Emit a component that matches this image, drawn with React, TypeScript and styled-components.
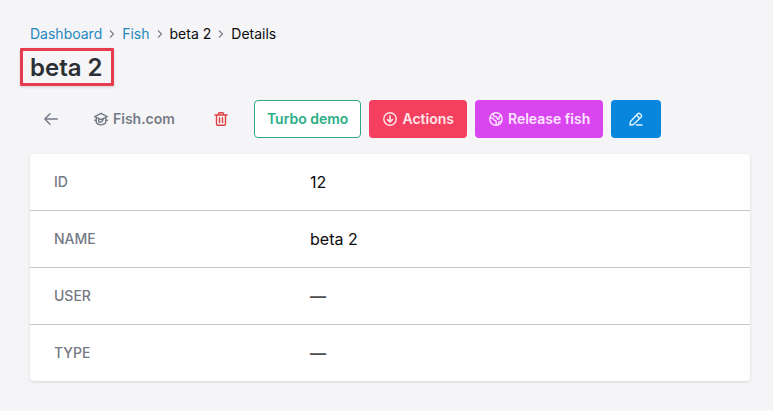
import React from "react";
import styled, { createGlobalStyle, css } from "styled-components";

const GlobalStyle = createGlobalStyle`
  * { box-sizing: border-box; }
  body {
    margin: 0;
    background: #f5f5f8;
    color: #0b0b0c;
    font-family: Inter, "Liberation Sans", sans-serif;
    font-size: 16px;
    line-height: 24px;
  }
`;

const Page = styled.main`
  padding: 24px 23px 30px 30px;
`;

const Breadcrumbs = styled.ol`
  display: flex;
  align-items: center;
  gap: 6px;
  margin: 0;
  padding: 0;
  list-style: none;
  font-size: 14px;
  line-height: 20px;
`;

const Crumb = styled.li`
  display: flex;
  align-items: center;
  gap: 6px;
`;

const CrumbLink = styled.a`
  color: #1f87bd;
  text-decoration: none;
`;

const Title = styled.h1`
  width: fit-content;
  margin: 4px 0 14px -10px;
  padding: 1px 8px 0 7px;
  border: 3px solid #e63c4d;
  border-radius: 1px;
  box-shadow: 0 1px 3px rgba(0, 0, 0, 0.15);
  color: #2c2f33;
  font-size: 24px;
  font-weight: 600;
  line-height: 31px;
`;

const Toolbar = styled.div`
  display: flex;
  gap: 8px;
  margin-bottom: 16px;
`;

type Tone = "plain" | "danger" | "outline" | "red" | "pink" | "blue";

const tones = {
  plain: css`color: #747b87;`,
  danger: css`color: #df3f40;`,
  outline: css`color: #2aae85; background: #fff; border-color: #2fa884;`,
  red: css`color: #ffe6ea; background: #f43f5e;`,
  pink: css`color: #fbe4ff; background: #d946ef;`,
  blue: css`color: #e3f4ff; background: #0886de;`,
};

const controlStyle = css<{ $tone: Tone; $icon?: boolean }>`
  display: inline-flex;
  align-items: center;
  justify-content: center;
  gap: 4px;
  height: 38px;
  padding: 0 ${(p) => (p.$icon ? 16 : 12)}px;
  border: 1px solid transparent;
  border-radius: 4px;
  background: transparent;
  font: 600 14px/20px Inter, "Liberation Sans", sans-serif;
  text-decoration: none;
  white-space: nowrap;
  cursor: pointer;
  ${(p) => tones[p.$tone]}
`;

const Button = styled.button`${controlStyle}`;
const ButtonLink = styled.a`${controlStyle}`;
const BackLink = styled(ButtonLink)`
  padding: 0 12px;
`;

const Glyph = styled.svg`
  flex: none;
  width: 16px;
  height: 16px;
  fill: none;
  stroke: currentColor;
  stroke-width: 1.4;
  stroke-linecap: round;
  stroke-linejoin: round;
`;

const Separator = styled.svg`
  width: 8px;
  height: 12px;
  fill: none;
  stroke: #7b7f86;
  stroke-width: 1.2;
`;

const Details = styled.table`
  width: 100%;
  border-spacing: 0;
  border-radius: 4px;
  background: #fff;
  box-shadow: 0 1px 3px rgba(0, 0, 0, 0.12);
`;

const Row = styled.tr`
  &:not(:last-child) > * { border-bottom: 1px solid #c3c4c7; }
`;

const Label = styled.th`
  width: 280px;
  padding: 16px 24px;
  color: #747984;
  font-size: 14px;
  font-weight: 500;
  text-align: left;
  text-transform: uppercase;
`;

const Value = styled.td`
  padding: 16px 24px 16px 0;
`;

const Dash = styled.span`
  color: #4b4d50;
  font-weight: 600;
`;

const ArrowLeftIcon = () => (
  <Glyph viewBox="0 0 16 16" aria-hidden="true">
    <path d="M14.3 8H1.8M7 2.8 1.8 8 7 13.2" />
  </Glyph>
);

const CapIcon = () => (
  <Glyph viewBox="0 0 16 16" aria-hidden="true">
    <path d="M8 2.300 14.300 5.700 8 8.600 1.700 5.700ZM3.300 6.500v5.300C5.500 14.500 10.500 14.500 12.700 11.800V6.500M1.600 9.300h1.700M12.700 9.300h1.700M5.700 8.200v2.400c1.500 1.200 3.500.500 4.600-2.400" />
  </Glyph>
);

const TrashIcon = () => (
  <Glyph viewBox="0 0 16 16" aria-hidden="true">
    <path d="M2 4h12M3.500 4v9a1.300 1.300 0 0 0 1.300 1.300h6.400a1.300 1.300 0 0 0 1.300-1.300V4M5.500 4V2.700c0-.6.5-1 1-1h3c.6 0 1 .4 1 1V4M6.500 6.800v4.700M9.500 6.800v4.700" />
  </Glyph>
);

const CircleDownIcon = () => (
  <Glyph viewBox="0 0 16 16" aria-hidden="true">
    <circle cx="8" cy="8" r="6.200" />
    <path d="M8 4.800v6M5.600 8.600 8 11l2.400-2.400" strokeWidth="1.600" />
  </Glyph>
);

const GlobeIcon = () => (
  <Glyph viewBox="0 0 16 16" aria-hidden="true">
    <circle cx="8" cy="8" r="6.200" />
    <path d="M2.200 6.500 5 7.300 6.200 9.200 8 9.800 8.300 13.800M4.800 2.900 6 5.200 8.300 5.800 9.600 8.300 11.300 7.800 11 5.800 13.300 4.800M10.500 13.500 10.800 11 13.500 10.200" />
  </Glyph>
);

const EditIcon = () => (
  <Glyph viewBox="0 0 16 16" aria-hidden="true">
    <path d="m2.500 10.500 7.300-7.800a1.400 1.400 0 0 1 2 0l1.400 1.400a1.400 1.400 0 0 1 0 2L5.500 13.500l-3.500.500zM8.500 4.200l3.300 3.300M8.500 14h5.500" />
  </Glyph>
);

const crumbs = [
  { text: "Dashboard", href: "#dashboard" },
  { text: "Fish", href: "#fish" },
  { text: "beta 2" },
  { text: "Details" },
];

const fields = [
  { label: "ID", value: "12" },
  { label: "Name", value: "beta 2" },
  { label: "User", value: null },
  { label: "Type", value: null },
];

export default function App() {
  return (
    <>
      <GlobalStyle />
      <Page>
        <nav aria-label="Breadcrumb">
          <Breadcrumbs>
            {crumbs.map((crumb, index) => (
              <Crumb key={crumb.text}>
                {index > 0 && (
                  <Separator viewBox="0 0 8 12" aria-hidden="true">
                    <path d="m2 2.500 3.500 3.500L2 9.500" />
                  </Separator>
                )}
                {crumb.href ? <CrumbLink href={crumb.href}>{crumb.text}</CrumbLink> : <span>{crumb.text}</span>}
              </Crumb>
            ))}
          </Breadcrumbs>
        </nav>
        <Title>beta 2</Title>
        <Toolbar>
          <BackLink href="#fish" $tone="plain" aria-label="Back"><ArrowLeftIcon /></BackLink>
          <ButtonLink href="#fish-com" $tone="plain"><CapIcon />Fish.com</ButtonLink>
          <Button type="button" $tone="danger" $icon aria-label="Delete"><TrashIcon /></Button>
          <Button type="button" $tone="outline">Turbo demo</Button>
          <Button type="button" $tone="red"><CircleDownIcon />Actions</Button>
          <Button type="button" $tone="pink"><GlobeIcon />Release fish</Button>
          <ButtonLink href="#edit" $tone="blue" $icon aria-label="Edit"><EditIcon /></ButtonLink>
        </Toolbar>
        <Details>
          <tbody>
            {fields.map((field) => (
              <Row key={field.label}>
                <Label scope="row">{field.label}</Label>
                <Value>{field.value ?? <Dash>—</Dash>}</Value>
              </Row>
            ))}
          </tbody>
        </Details>
      </Page>
    </>
  );
}
